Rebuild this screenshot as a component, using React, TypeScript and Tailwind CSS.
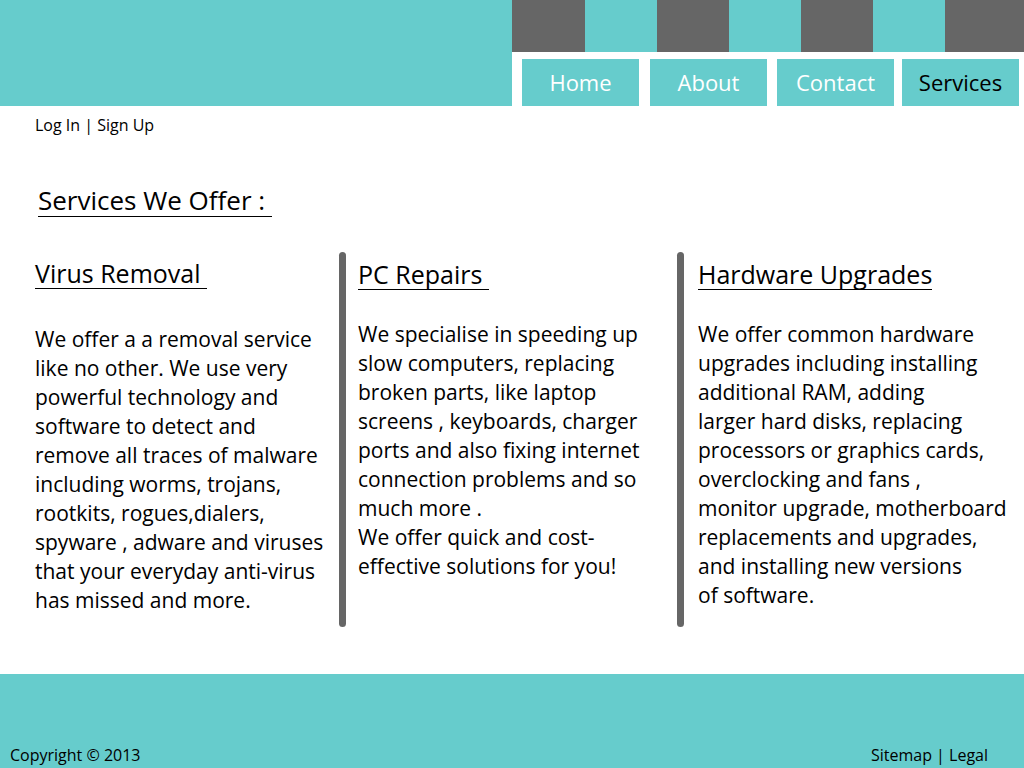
import React from "react";

const col1 = [
  "We offer a a removal service",
  "like no other. We use very",
  "powerful technology and",
  "software to detect and",
  "remove all traces of malware",
  "including worms, trojans,",
  "rootkits, rogues,dialers,",
  "spyware , adware and viruses",
  "that your everyday anti-virus",
  "has missed and more.",
];
const col2 = [
  "We specialise in speeding up",
  "slow computers, replacing",
  "broken parts, like laptop",
  "screens , keyboards, charger",
  "ports and also fixing internet",
  "connection problems and so",
  "much more .",
  "We offer quick and cost-",
  "effective solutions for you!",
];
const col3 = [
  "We offer common hardware",
  "upgrades including installing",
  "additional RAM, adding",
  "larger hard disks, replacing",
  "processors or graphics cards,",
  "overclocking and fans ,",
  "monitor upgrade, motherboard",
  "replacements and upgrades,",
  "and installing new versions",
  "of software.",
];

function Lines({ lines }: { lines: string[] }) {
  return (
    <div className="text-[21px] leading-[29px] text-black whitespace-pre">
      {lines.map((l, i) => (
        <div key={i}>{l}</div>
      ))}
    </div>
  );
}

function Bar() {
  return <div className="w-[7px] h-[375px] bg-[#666666] rounded-full shrink-0" />;
}

export default function App() {
  const squares = ["bg-[#666666] w-[73px]", "bg-[#66cccc] w-[72px]", "bg-[#666666] w-[72px]", "bg-[#66cccc] w-[72px]", "bg-[#666666] w-[72px]", "bg-[#66cccc] w-[72px]", "bg-[#666666] flex-1"];
  const nav = [
    { t: "Home", c: "text-white w-[117px] ml-[10px]" },
    { t: "About", c: "text-white w-[117px] ml-[11px]" },
    { t: "Contact", c: "text-white w-[117px] ml-[10px]" },
    { t: "Services", c: "text-black w-[117px] ml-[8px]" },
  ];
  return (
    <div className="w-[1024px] h-[768px] bg-white flex flex-col overflow-hidden" style={{ fontFamily: "'Open Sans', sans-serif" }}>
      <header className="flex h-[106px] shrink-0">
        <div className="w-[512px] bg-[#66cccc]" />
        <div className="w-[512px] flex flex-col">
          <div className="flex h-[52px]">
            {squares.map((s, i) => (
              <div key={i} className={s} />
            ))}
          </div>
          <div className="flex pt-[7px] flex-1">
            {nav.map((n) => (
              <div key={n.t} className={`${n.c} bg-[#66cccc] flex items-center justify-center text-[22px]`}>
                {n.t}
              </div>
            ))}
          </div>
        </div>
      </header>

      <div className="pl-[35px] pt-[9px] text-[16px] leading-[20px] text-black">Log In | Sign Up</div>

      <div className="pl-[38px] mt-[50px]">
        <span className="text-[26px] leading-[30px] text-black border-b-[1.5px] border-black pb-[1px] whitespace-pre inline-block">Services We Offer : </span>
      </div>

      <div className="flex mt-[35px] h-[375px]">
        <div className="w-[339px] pl-[35px] pt-[6px]">
          <div className="text-[25px] leading-[30px] text-black whitespace-pre">
            <span className="border-b-[1.5px] border-black inline-block leading-[29px]">Virus Removal </span>
          </div>
          <div className="mt-[36px]">
            <Lines lines={col1} />
          </div>
        </div>
        <Bar />
        <div className="w-[331px] pl-[12px] pt-[7px]">
          <div className="text-[25px] leading-[30px] text-black whitespace-pre">
            <span className="border-b-[1.5px] border-black inline-block leading-[29px]">PC Repairs </span>
          </div>
          <div className="mt-[30px]">
            <Lines lines={col2} />
          </div>
        </div>
        <Bar />
        <div className="pl-[14px] pt-[7px]">
          <div className="text-[25px] leading-[30px] text-black whitespace-pre">
            <span className="border-b-[1.5px] border-black inline-block leading-[29px]">Hardware Upgrades</span>
          </div>
          <div className="mt-[30px]">
            <Lines lines={col3} />
          </div>
        </div>
      </div>

      <footer className="mt-auto h-[94px] bg-[#66cccc] flex items-end justify-between pl-[10px] pr-[36px] pb-[3px] text-[16px] leading-[20px] text-black">
        <span>Copyright © 2013</span>
        <span>Sitemap | Legal</span>
      </footer>
    </div>
  );
}
